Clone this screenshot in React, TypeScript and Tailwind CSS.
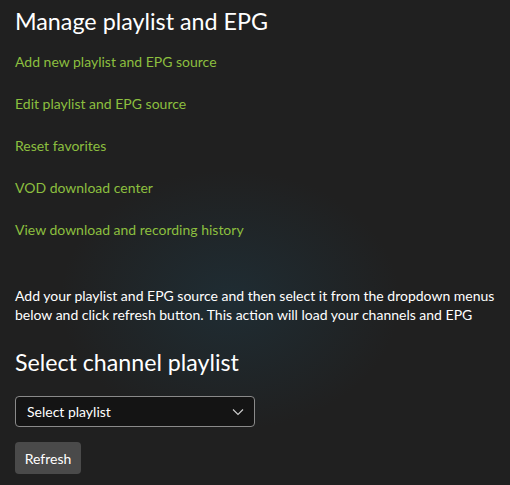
import React from "react";

const links = [
  "Add new playlist and EPG source",
  "Edit playlist and EPG source",
  "Reset favorites",
  "VOD download center",
  "View download and recording history",
];

export default function App() {
  return (
    <div
      className="relative w-[510px] h-[485px] overflow-hidden bg-[#202020] text-white"
      style={{ fontFamily: '"Segoe UI", Lato, sans-serif' }}
    >
      <div className="pointer-events-none absolute left-[60px] top-[170px] w-[340px] h-[260px] rounded-full bg-[radial-gradient(closest-side,rgba(30,60,75,0.45),rgba(32,32,32,0))]" />
      <div className="relative flex flex-col px-[15px]">
        <h1 className="mt-[5px] text-[23.3px] leading-[32px] font-normal">Manage playlist and EPG</h1>
        <div className="mt-[15px] flex flex-col gap-[22px]">
          {links.map((l) => (
            <a key={l} className="text-[14px] leading-[20px] text-[#8cbf3f] cursor-pointer">
              {l}
            </a>
          ))}
        </div>
        <p className="mt-[46px] text-[14px] leading-[19px]">
          Add your playlist and EPG source and then select it from the dropdown menus below and click refresh button. This action will load your channels and EPG
        </p>
        <h2 className="mt-[22px] text-[23.2px] leading-[32px] font-normal">Select channel playlist</h2>
        <button className="mt-[18px] w-[240px] h-[31px] flex items-center justify-between pl-[11px] pr-[10px] rounded-[4px] border border-[#8a8a8a] bg-[#141414] text-[14px]">
          <span>Select playlist</span>
          <svg width="12" height="8" viewBox="0 0 12 8" fill="none">
            <path d="M1 1.5L6 6.5L11 1.5" stroke="#cfcfcf" strokeWidth="1.1" />
          </svg>
        </button>
        <button className="mt-[15px] w-[66px] h-[32px] rounded-[4px] bg-[#4a4a4a] text-[14px] text-white">
          Refresh
        </button>
      </div>
    </div>
  );
}
